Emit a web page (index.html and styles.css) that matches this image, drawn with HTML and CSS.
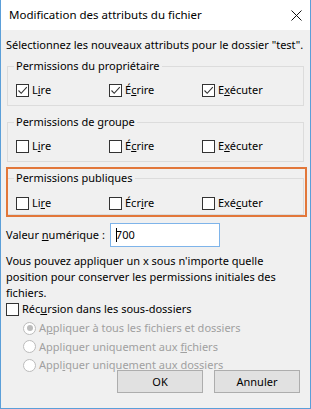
FILE: index.html
```html
<!DOCTYPE html>
<html lang="fr">
<head>
    <meta charset="UTF-8">
    <title>Modification des attributs du fichier</title>
    <link rel="stylesheet" href="styles.css">
</head>
<body>

<div class="window">
    <div class="titlebar">
        <span class="title">Modification des attributs du fichier</span>
        <svg class="close" width="11" height="11" viewBox="0 0 11 11">
            <path d="M0.5 0.5 L10.5 10.5 M10.5 0.5 L0.5 10.5" stroke="#111" stroke-width="1" fill="none"/>
        </svg>
    </div>

    <div class="client">
        <p class="intro">Sélectionnez les nouveaux attributs pour le dossier "test".</p>

        <fieldset class="group">
            <legend>Permissions du propriétaire</legend>
            <div class="row">
                <span class="check"><span class="box"><svg viewBox="0 0 11 11"><path d="M1.5 5.5 L4.2 8.3 L9.8 2.2"/></svg></span><span>L<u>i</u>re</span></span>
                <span class="check"><span class="box"><svg viewBox="0 0 11 11"><path d="M1.5 5.5 L4.2 8.3 L9.8 2.2"/></svg></span><span>É<u>c</u>rire</span></span>
                <span class="check"><span class="box"><svg viewBox="0 0 11 11"><path d="M1.5 5.5 L4.2 8.3 L9.8 2.2"/></svg></span><span>E<u>x</u>écuter</span></span>
            </div>
        </fieldset>

        <fieldset class="group">
            <legend>Permissions de groupe</legend>
            <div class="row">
                <span class="check"><span class="box"></span><span>L<u>i</u>re</span></span>
                <span class="check"><span class="box"></span><span>É<u>c</u>rire</span></span>
                <span class="check"><span class="box"></span><span>E<u>x</u>écuter</span></span>
            </div>
        </fieldset>

        <fieldset class="group marked">
            <legend>Permissions publiques</legend>
            <div class="row">
                <span class="check"><span class="box"></span><span>Li<u>r</u>e</span></span>
                <span class="check"><span class="box"></span><span>Écr<u>i</u>re</span></span>
                <span class="check"><span class="box"></span><span>Exé<u>c</u>uter</span></span>
            </div>
        </fieldset>

        <div class="value-row">
            <span>Valeur <u>n</u>umérique :</span>
            <span class="field"><span class="caret"></span><span>700</span></span>
        </div>

        <p class="note">Vous pouvez appliquer un x sous n'importe quelle position pour conserver les permissions initiales des fichiers.</p>

        <div class="recurse">
            <span class="check"><span class="box"></span><span>Réc<u>u</u>rsion dans les sous-dossiers</span></span>
        </div>

        <div class="radios">
            <span class="radio"><span class="dot on"></span><span>A<u>p</u>pliquer à tous les fichiers et dossiers</span></span>
            <span class="radio"><span class="dot"></span><span>Appliquer uniquement aux <u>f</u>ichiers</span></span>
            <span class="radio"><span class="dot"></span><span>Appl<u>i</u>quer uniquement aux dossiers</span></span>
        </div>

        <div class="buttons">
            <button>OK</button>
            <button>Annuler</button>
        </div>
    </div>
</div>

</body>
</html>
```

FILE: styles.css
```css
* {
    box-sizing: border-box;
    margin: 0;
    padding: 0;
}

body {
    font-family: "Noto Sans", "Open Sans", sans-serif;
    font-size: 11px;
    line-height: 16px;
    color: #000;
    background: #fff;
}

.window {
    width: 311px;
    height: 409px;
    border: 1px solid #5b9fd9;
    border-top: none;
    display: flex;
    flex-direction: column;
    background: #f0f0f0;
}

.titlebar {
    height: 30px;
    background: #fff;
    display: flex;
    align-items: center;
    justify-content: space-between;
    padding: 0 8px 0 8px;
}

.title {
    font-size: 11.5px;
}

.close {
    margin-top: 1px;
}

.client {
    flex: 1;
    padding: 7px 6px 15px 6px;
    display: flex;
    flex-direction: column;
}

.client > * {
    flex-shrink: 0;
}

.intro {
    margin-left: -1px;
}

.group {
    border: 1px solid #dcdcdc;
    padding: 8px 8px 7px 8px;
    margin-top: 5px;
}

.group + .group {
    margin-top: 8px;
}

.group legend {
    padding: 0 2px;
    margin-left: -2px;
}

.row {
    display: grid;
    grid-template-columns: 93px 93px 1fr;
}

.check {
    display: flex;
    align-items: center;
}

.box {
    width: 13px;
    height: 13px;
    border: 1px solid #333;
    background: #fff;
    margin-right: 3px;
    flex-shrink: 0;
    display: flex;
}

.box svg {
    width: 11px;
    height: 11px;
    fill: none;
    stroke: #333;
    stroke-width: 1.1;
}

/* orange highlight drawn over the third group */
.group.marked {
    position: relative;
    margin-top: 8px;
    padding-top: 9px;
    padding-bottom: 3px;
}

.marked::after {
    content: "";
    position: absolute;
    top: -19px;
    left: -2px;
    right: -4px;
    bottom: -3px;
    border: 2.5px solid #e2773a;
}

.value-row {
    display: flex;
    align-items: center;
    margin-top: 8px;
    margin-left: -1px;
}

.field {
    width: 110px;
    height: 24px;
    margin-left: 5px;
    border: 1px solid #7eb4ea;
    background: #fff;
    display: flex;
    align-items: center;
    padding-left: 5px;
}

.caret {
    width: 1px;
    height: 14px;
    background: #000;
    margin-right: -1px;
}

.note {
    margin-top: 6px;
    margin-left: -1px;
}

.recurse {
    margin-top: 0;
    margin-left: -1px;
}

.radios {
    display: flex;
    flex-direction: column;
    padding-left: 16px;
    margin-top: 2px;
    margin-bottom: -8px;
    color: #a0a0a0;
}

.radio {
    display: flex;
    align-items: center;
    height: 18.5px;
}

.dot {
    width: 13px;
    height: 13px;
    border: 1px solid #bcbcbc;
    border-radius: 50%;
    background: #fff;
    margin-right: 3px;
    position: relative;
    flex-shrink: 0;
}

.dot.on::after {
    content: "";
    position: absolute;
    left: 2.5px;
    top: 2.5px;
    width: 6px;
    height: 6px;
    border-radius: 50%;
    background: #bcbcbc;
}

.buttons {
    display: flex;
    justify-content: flex-end;
    gap: 11px;
    margin-top: auto;
    padding-right: 4px;
}

button {
    width: 86px;
    height: 23px;
    font-family: inherit;
    font-size: 11px;
    background: #e1e1e1;
    border: 1px solid #adadad;
    color: #000;
}
```
